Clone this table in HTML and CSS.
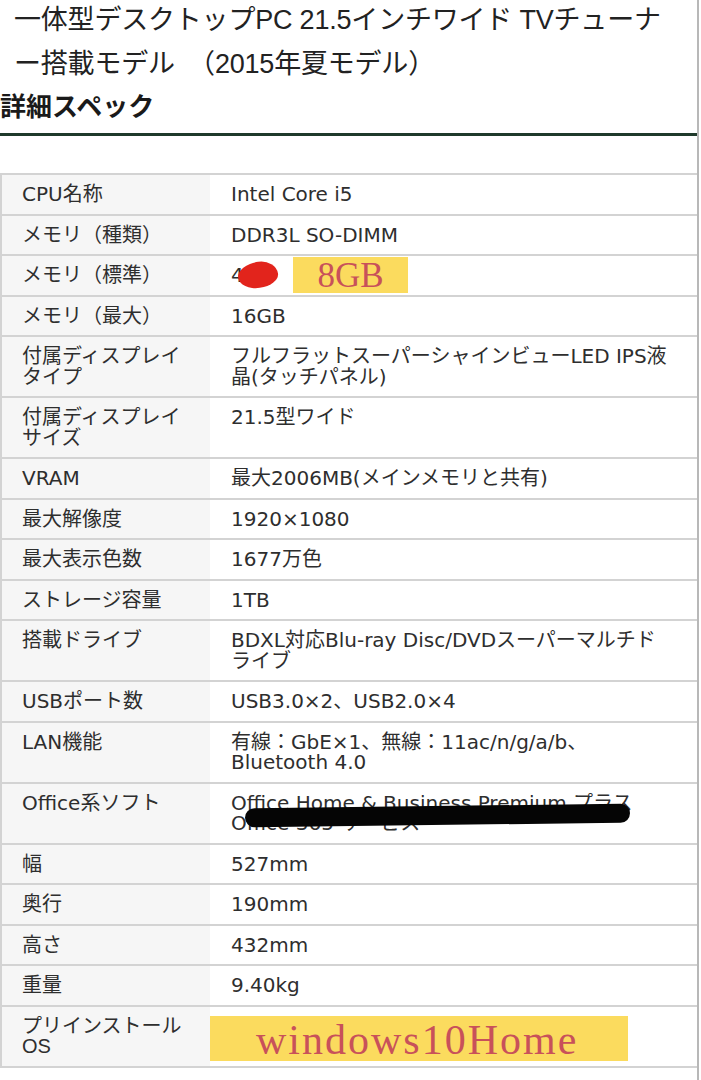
FILE: index.html
```html
<!DOCTYPE html>
<html lang="ja">
<head>
<meta charset="utf-8">
<title>詳細スペック</title>
<link rel="stylesheet" href="styles.css">
</head>
<body>
<div class="page">
  <h1 class="title">一体型デスクトップPC 21.5インチワイド TVチューナ<br>ー搭載モデル　（2015年夏モデル）</h1>
  <h2 class="heading">詳細スペック</h2>
  <table class="spec">
    <tr><th>CPU名称</th><td>Intel Core i5</td></tr>
    <tr><th>メモリ（種類）</th><td>DDR3L SO-DIMM</td></tr>
    <tr><th>メモリ（標準）</th><td class="rel">4GB<span class="blob"></span><span class="sticker sticker-mem">8GB</span></td></tr>
    <tr><th>メモリ（最大）</th><td>16GB</td></tr>
    <tr><th>付属ディスプレイ<br>タイプ</th><td>フルフラットスーパーシャインビューLED IPS液<br>晶(タッチパネル)</td></tr>
    <tr><th>付属ディスプレイ<br>サイズ</th><td>21.5型ワイド</td></tr>
    <tr><th>VRAM</th><td>最大2006MB(メインメモリと共有)</td></tr>
    <tr><th>最大解像度</th><td>1920×1080</td></tr>
    <tr><th>最大表示色数</th><td>1677万色</td></tr>
    <tr><th>ストレージ容量</th><td>1TB</td></tr>
    <tr><th>搭載ドライブ</th><td>BDXL対応Blu-ray Disc/DVDスーパーマルチド<br>ライブ</td></tr>
    <tr><th>USBポート数</th><td>USB3.0×2、USB2.0×4</td></tr>
    <tr><th>LAN機能</th><td>有線：GbE×1、無線：11ac/n/g/a/b、<br>Bluetooth 4.0</td></tr>
    <tr><th>Office系ソフト</th><td class="rel">Office Home &amp; Business Premium プラス<br>Office 365 サービス<span class="marker"></span></td></tr>
    <tr><th>幅</th><td>527mm</td></tr>
    <tr><th>奥行</th><td>190mm</td></tr>
    <tr><th>高さ</th><td>432mm</td></tr>
    <tr><th>重量</th><td>9.40kg</td></tr>
    <tr><th class="narrow">プリインストール<br>OS</th><td class="rel"><span class="sticker sticker-os">windows10Home</span></td></tr>
  </table>
</div>
</body>
</html>
```
FILE: styles.css
```css
html, body {
  margin: 0;
  padding: 0;
  background: #ffffff;
}
body {
  font-family: "DejaVu Sans", "Noto Sans CJK JP", sans-serif;
  color: #2a2a2a;
}
.page {
  width: 697px;
  min-height: 1080px;
  border-right: 2px solid #b8b8b8;
  overflow: hidden;
}
.title {
  margin: -2px 0 0 0;
  padding-left: 14px;
  font-family: "Liberation Sans", "Noto Sans CJK JP", sans-serif;
  font-size: 27px;
  font-weight: normal;
  line-height: 44px;
  letter-spacing: -0.2px;
  color: #222;
}
.heading {
  margin: 0;
  padding: 1px 0 10px 0;
  font-family: "Noto Sans CJK JP", sans-serif;
  font-size: 26px;
  font-weight: bold;
  line-height: 36px;
  color: #1a1a1a;
  border-bottom: 3px solid #1f3a2b;
}
.spec {
  margin-top: 37px;
  width: 697px;
  border-collapse: collapse;
  border: 2px solid #d3d3d3;
  border-right: none;
  font-size: 20px;
  line-height: 20.5px;
  color: #2e2e2e;
}
.spec th, .spec td {
  padding: 9px 0;
  text-align: left;
  vertical-align: top;
  font-weight: normal;
  border-top: 2px solid #d3d3d3;
  border-bottom: 2px solid #d3d3d3;
  white-space: nowrap;
}
.spec th {
  width: 188px;
  padding-left: 20px;
  background: #f6f6f6;
}
.spec td {
  padding-left: 21px;
  background: #ffffff;
}
.spec th.narrow {
  font-family: "Liberation Sans", "Noto Sans CJK JP", sans-serif;
}
.rel {
  position: relative;
}
.blob {
  position: absolute;
  left: 28px;
  top: 6px;
  width: 40px;
  height: 26px;
  background: #e2241c;
  border-radius: 55% 45% 50% 50% / 50% 55% 45% 50%;
  transform: rotate(-8deg);
}
.sticker {
  position: absolute;
  background: #fbdb5e;
  font-family: "Liberation Serif", serif;
  color: #c8515a;
  text-align: center;
}
.sticker-mem {
  left: 83px;
  top: 1px;
  width: 115px;
  height: 36px;
  font-size: 35px;
  line-height: 38px;
}
.sticker-os {
  left: 0;
  top: 9px;
  width: 418px;
  height: 45px;
  font-size: 42px;
  line-height: 48px;
  letter-spacing: 2px;
  text-align: left;
  padding-left: 46px;
  box-sizing: border-box;
}
.marker {
  position: absolute;
  left: 35px;
  top: 22px;
  width: 385px;
  height: 19px;
  background: #050505;
  border-radius: 10px;
  transform: rotate(-0.7deg);
}
```
